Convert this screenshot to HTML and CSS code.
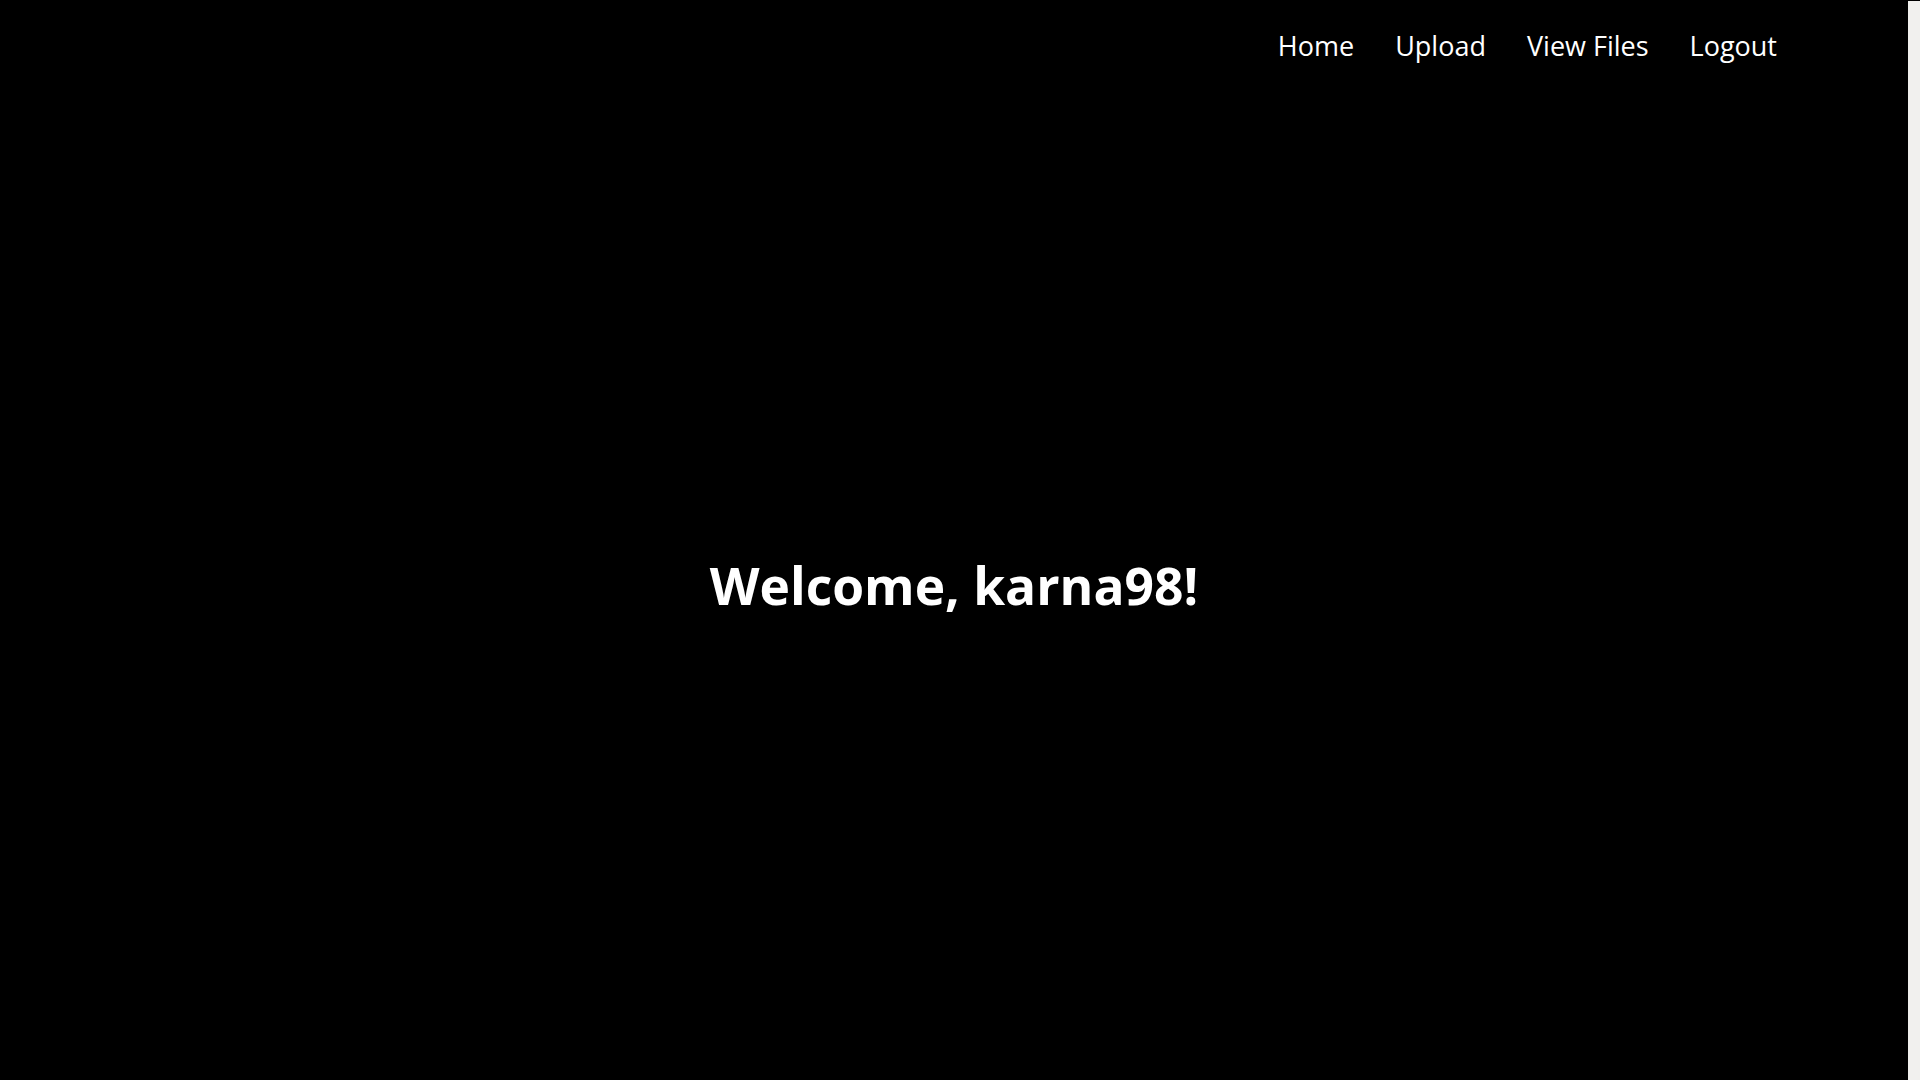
FILE: index.html
```html
<!DOCTYPE html>
<html lang="en">
<head>
<meta charset="utf-8">
<title>Home</title>
<link rel="stylesheet" href="styles.css">
</head>
<body>
<div class="page">
  <header class="topbar">
    <nav class="nav">
      <a class="nav-link" href="#">Home</a>
      <a class="nav-link" href="#">Upload</a>
      <a class="nav-link" href="#">View Files</a>
      <a class="nav-link" href="#">Logout</a>
    </nav>
  </header>
  <main class="hero">
    <h1 class="welcome">Welcome, karna98!</h1>
  </main>
</div>
<div class="scrollbar"></div>
</body>
</html>
```

FILE: styles.css
```css
html, body {
  margin: 0;
  padding: 0;
  height: 100%;
}
body {
  display: flex;
  background: #000;
  color: #fff;
  font-family: "Open Sans", "Noto Sans", sans-serif;
  overflow: hidden;
}
.page {
  flex: 1;
  display: flex;
  flex-direction: column;
}
.topbar {
  display: flex;
  justify-content: flex-end;
  padding: 26px 131px 0 0;
}
.nav {
  display: flex;
  gap: 41px;
}
.nav-link {
  color: #fff;
  text-decoration: none;
  font-size: 27px;
  line-height: 40px;
  letter-spacing: 0;
}
.hero {
  flex: 1;
  display: flex;
  align-items: center;
  justify-content: center;
  padding-top: 24px;
}
.welcome {
  margin: 0;
  font-size: 51.5px;
  font-weight: 700;
  letter-spacing: 0;
}
.scrollbar {
  width: 12px;
  margin-top: 1px;
  background: #f1f0ee;
}
```
